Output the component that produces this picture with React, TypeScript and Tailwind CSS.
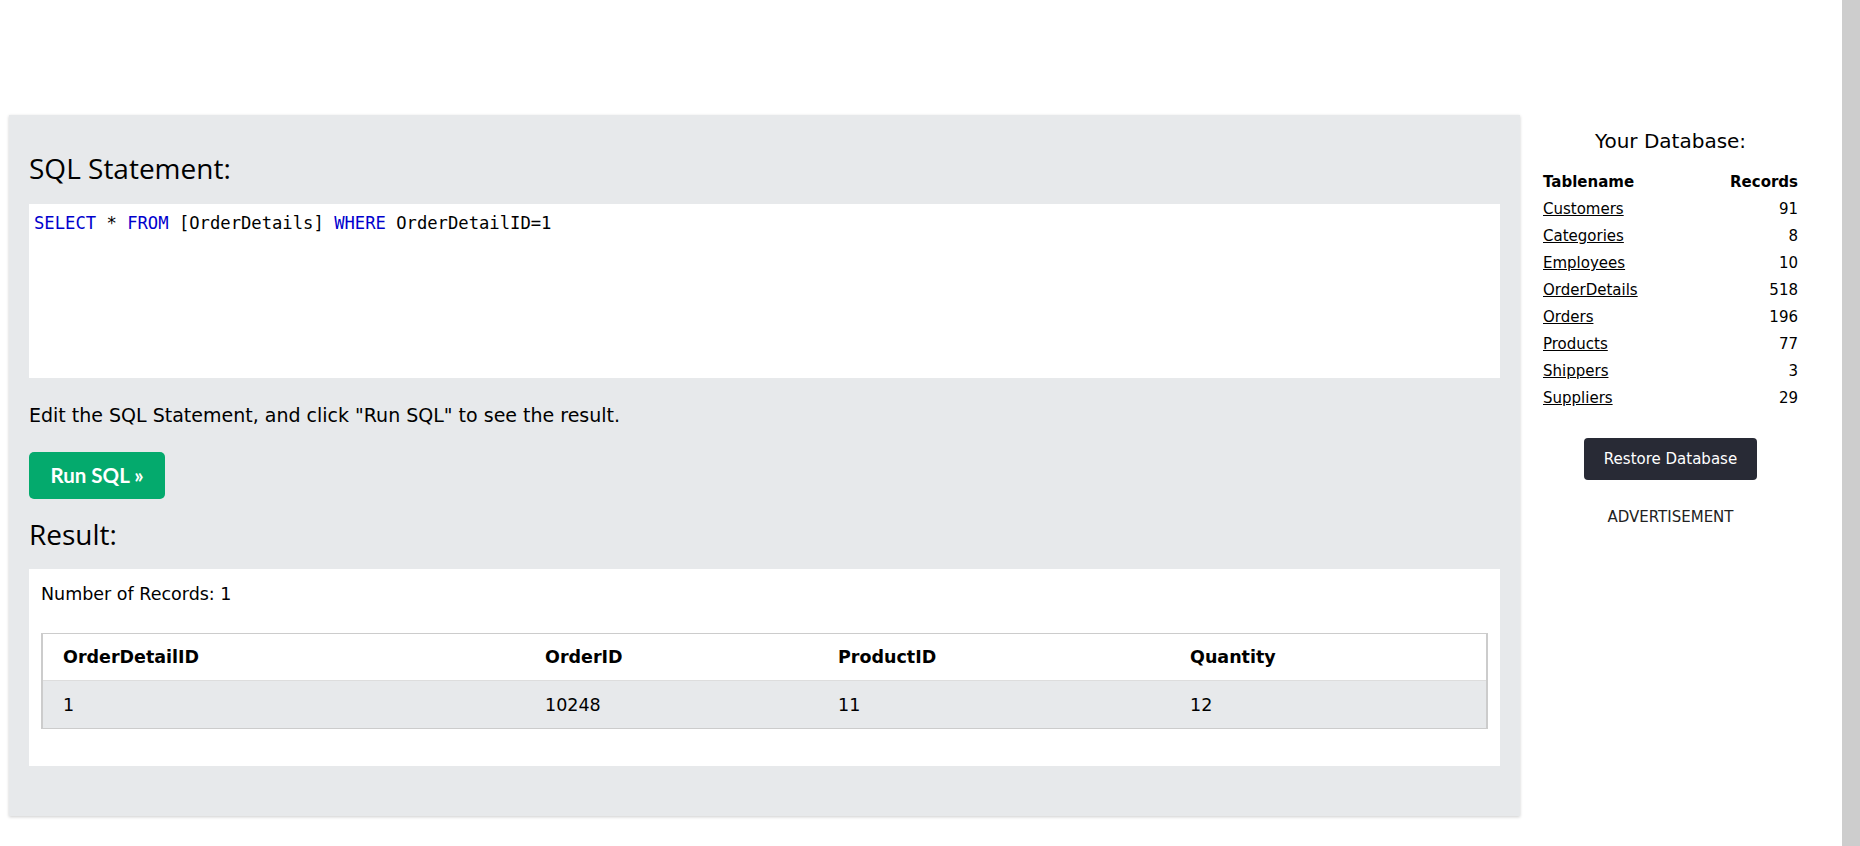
import React from 'react';

type TableRow = {
  name: string;
  records: number;
};

const tables: TableRow[] = [
  { name: 'Customers', records: 91 },
  { name: 'Categories', records: 8 },
  { name: 'Employees', records: 10 },
  { name: 'OrderDetails', records: 518 },
  { name: 'Orders', records: 196 },
  { name: 'Products', records: 77 },
  { name: 'Shippers', records: 3 },
  { name: 'Suppliers', records: 29 },
];

const columns = ['OrderDetailID', 'OrderID', 'ProductID', 'Quantity'];
const result = ['1', '10248', '11', '12'];

const heading = "font-['Open_Sans',sans-serif] text-[28px] leading-[36px] text-black";

const App = () => {
  return (
    <div className="flex min-h-[846px] bg-white font-['DejaVu_Sans',Verdana,sans-serif] text-black">
      {/* editor panel */}
      <main className="ml-[9px] mt-[115px] mb-[30px] w-[1511px] self-start bg-[#e7e9eb] px-[20px] pt-[35px] pb-[50px] shadow-[0_1px_3px_0_rgba(0,0,0,0.2)]">
        <h3 className={heading}>SQL Statement:</h3>
        <div className="mt-[18px] h-[174px] bg-white px-[5px] pt-[7px] font-['DejaVu_Sans_Mono',monospace] text-[17.2px] leading-[24px] text-black">
          <span className="text-[#0000cd]">SELECT</span> * <span className="text-[#0000cd]">FROM</span> [OrderDetails]{' '}
          <span className="text-[#0000cd]">WHERE</span> OrderDetailID=1
        </div>
        <p className="mt-[23px] text-[19px] leading-[28px]">
          Edit the SQL Statement, and click "Run SQL" to see the result.
        </p>
        <button className="mt-[23px] flex h-[47px] w-[136px] items-center justify-center rounded-[5px] bg-[#04aa6d] font-['Lato',sans-serif] text-[20.5px] font-bold text-white">
          Run SQL »
        </button>
        <h3 className={`mt-[17px] ${heading}`}>Result:</h3>
        <div className="mt-[17px] bg-white px-[12px] pt-[12px] pb-[37px]">
          <p className="text-[17.5px] leading-[26px]">Number of Records: 1</p>
          <div className="mt-[26px] border-y border-x-2 border-[#cccccc] text-[17.5px]">
            <div className="grid h-[47px] grid-cols-[492px_293px_352px_1fr] items-center border-b border-[#dddddd] bg-white pt-[1px] font-bold">
              {columns.map((col, i) => (
                <div key={col} className={i === 0 ? 'pl-[20px]' : 'pl-[10px]'}>
                  {col}
                </div>
              ))}
            </div>
            <div className="grid h-[47px] grid-cols-[492px_293px_352px_1fr] items-center bg-[#e7e9eb] pt-[1px]">
              {result.map((val, i) => (
                <div key={i} className={i === 0 ? 'pl-[20px]' : 'pl-[10px]'}>
                  {val}
                </div>
              ))}
            </div>
          </div>
        </div>
      </main>

      {/* database sidebar */}
      <aside className="flex w-[301px] flex-col items-center pt-[127px]">
        <h4 className="text-[20px] leading-[28px]">Your Database:</h4>
        <div className="mt-[14px] w-[255px] text-[15px] leading-[27px]">
          <div className="flex justify-between font-bold">
            <span>Tablename</span>
            <span>Records</span>
          </div>
          {tables.map((t) => (
            <div key={t.name} className="flex justify-between">
              <a href="#" className="text-black underline">
                {t.name}
              </a>
              <span>{t.records}</span>
            </div>
          ))}
        </div>
        <button className="mt-[26px] flex h-[42px] w-[173px] items-center justify-center rounded-[4px] bg-[#282a35] text-[15px] text-white">
          Restore Database
        </button>
        <p className="mt-[26px] text-[15px] leading-[22px] text-[#222]">ADVERTISEMENT</p>
      </aside>

      {/* scrollbar track */}
      <div className="ml-auto w-[18px] bg-[#cdcdcd]" />
    </div>
  );
};

export default App;
